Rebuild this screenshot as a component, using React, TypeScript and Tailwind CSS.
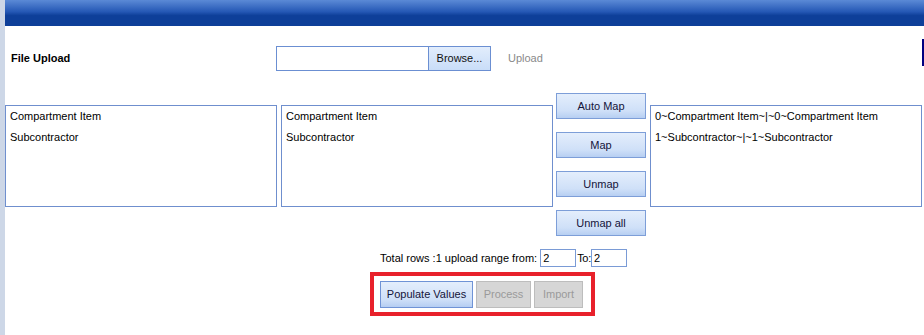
import * as React from "react"

const FONT = "font-['Liberation_Sans',Arial,sans-serif]"

const leftItems = ["Compartment Item", "Subcontractor"]
const mapped = ["0~Compartment Item~|~0~Compartment Item", "1~Subcontractor~|~1~Subcontractor"]

function ListBox({ items, className = "" }: { items: string[]; className?: string }) {
  return (
    <div className={`h-[102px] w-[272px] border border-[#6f8fce] bg-white px-[4px] ${className}`}>
      {items.map((it) => (
        <div key={it} className="leading-[21px] text-[11px] text-black whitespace-nowrap">
          {it}
        </div>
      ))}
    </div>
  )
}

function MapButton({ label }: { label: string }) {
  return (
    <button className="h-[26px] w-[90px] border border-[#7d9ed8] bg-[linear-gradient(#e4eefc,#cfe0f8_70%,#b7cff2)] text-[11px] text-[#14143a]">
      {label}
    </button>
  )
}

export default function App() {
  return (
    <div className={`flex min-h-[335px] w-[924px] bg-white ${FONT}`}>
      <div className="w-[5px] shrink-0 bg-[#cdd7e7]" />
      <div className="flex flex-1 flex-col">
        {/* header bar */}
        <div className="h-[26px] bg-[linear-gradient(#5b8ad6,#2558b5_45%,#0e3f99_60%,#0e3f99)]" />

        {/* file upload row */}
        <div className="mt-[20px] flex h-[25px] items-center">
          <div className="w-[271px] pl-[6px] text-[11px] font-bold text-black">File Upload</div>
          <div className="flex h-[25px] border border-[#6b8fd2]">
            <div className="w-[151px] bg-white" />
            <button className="w-[62px] border-l border-[#6b8fd2] bg-[linear-gradient(#e2edfc,#c9ddf8)] text-[11px] text-[#111]">
              Browse...
            </button>
          </div>
          <span className="ml-[17px] text-[11px] text-[#8a8a8a]">Upload</span>
          <div className="-mt-[12px] ml-auto h-[27px] w-[2px] bg-[#000080]" />
        </div>

        {/* mapping row */}
        <div className="mt-[22px] flex items-start">
          <ListBox items={leftItems} className="mt-[12px]" />
          <ListBox items={leftItems} className="ml-[4px] mt-[12px]" />
          <div className="ml-[3px] flex flex-col gap-[13px]">
            <MapButton label="Auto Map" />
            <MapButton label="Map" />
            <MapButton label="Unmap" />
            <MapButton label="Unmap all" />
          </div>
          <ListBox items={mapped} className="ml-[4px] mt-[12px]" />
        </div>

        {/* range row */}
        <div className="mt-[13px] flex h-[18px] items-center pl-[375px] text-[11px] text-black">
          <span>Total rows :1 upload range from:</span>
          <div className="ml-[3px] flex h-[18px] w-[36px] items-center border border-[#7a9bd6] pl-[2px]">2</div>
          <span className="ml-[1px] tracking-[-0.3px]">To:</span>
          <div className="flex h-[18px] w-[36px] items-center border border-[#7a9bd6] pl-[2px]">2</div>
        </div>

        {/* action buttons */}
        <div className="ml-[365px] mt-[5px] flex h-[44px] w-[225px] items-start gap-[3px] border-4 border-[#e8212b] pl-[6px] pt-[5px]">
          <button className="h-[27px] w-[93px] border border-[#6f93d6] bg-[linear-gradient(#e4eefc,#cfe0f8_70%,#b5cdf2)] text-[11px] text-[#14143a]">
            Populate Values
          </button>
          <button className="h-[27px] w-[55px] border border-[#bdbdbd] bg-[#d6d6d6] text-[11px] text-[#9a9a9a]">
            Process
          </button>
          <button className="h-[27px] w-[49px] border border-[#bdbdbd] bg-[#d6d6d6] text-[11px] text-[#9a9a9a]">
            Import
          </button>
        </div>
      </div>
    </div>
  )
}
